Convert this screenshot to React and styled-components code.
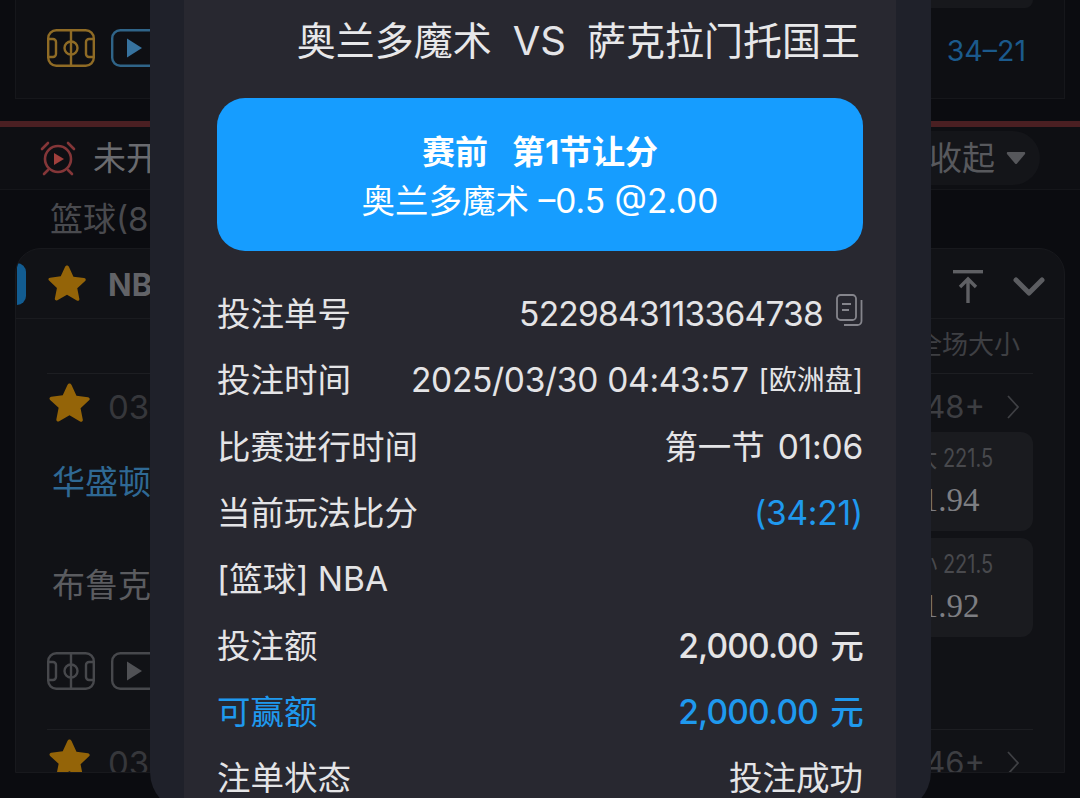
import React from "react";
import styled, { createGlobalStyle } from "styled-components";

const Global = createGlobalStyle`
  html, body { margin: 0; padding: 0; background: #0b0c10; }
  * { box-sizing: border-box; }
`;

const SANS = `Inter, "Noto Sans CJK SC", sans-serif`;

const Page = styled.div`
  position: relative;
  width: 1080px;
  height: 798px;
  overflow: hidden;
  background: #0b0c10;
  font-family: ${SANS};
  line-height: 40px;
`;

/* ---------- match list behind the receipt ---------- */

const TopCard = styled.section`
  height: 99px;
  margin: 0 15px;
  padding: 0 38px 0 31px;
  background: #0e0f13;
  border: 1px solid #16171b;
  border-top: none;
  display: flex;
  flex-direction: column;
`;

const OddsStub = styled.div`
  align-self: flex-end;
  width: 173px;
  height: 8px;
  margin-right: -7px;
  background: #17181c;
  border-radius: 0 0 12px 12px;
`;

const TopRow = styled.div`
  display: flex;
  align-items: center;
  justify-content: space-between;
  height: 80px;
`;

const IconRow = styled.div`
  display: flex;
  align-items: center;
  gap: 16px;
`;

const Score = styled.span`
  margin-top: 5px;
  font-size: 28.5px;
  color: #1b5a8c;
`;

const RedLine = styled.div`
  height: 6px;
  margin-top: 22px;
  background: #4a1f22;
`;

const StatusBar = styled.div`
  height: 63px;
  padding: 0 40px 0 40px;
  background: #0e0f13;
  border-bottom: 1px solid #15161a;
  display: flex;
  align-items: center;
  justify-content: space-between;
`;

const StatusLeft = styled.div`
  display: flex;
  align-items: center;
  gap: 17px;
  font-size: 33px;
  color: #6a6b6f;
`;

const Collapse = styled.div`
  height: 54px;
  padding: 0 14px 0 24px;
  border-radius: 27px;
  background: #141519;
  display: flex;
  align-items: center;
  gap: 11px;
  font-size: 33px;
  color: #58595d;
`;

const SportLabel = styled.div`
  height: 58px;
  padding-left: 50px;
  display: flex;
  align-items: center;
  font-size: 33px;
  color: #494a4e;
`;

const LeagueCard = styled.section`
  margin: 0 15px;
  height: 525px;
  padding: 0 1px;
  overflow: hidden;
  background: #111216;
  border: 1px solid #18191d;
  border-radius: 26px 26px 0 0;
`;

const LeagueHead = styled.header`
  height: 70px;
  margin: 0 -1px;
  padding-right: 19px;
  border-bottom: 1px solid #1a1b1f;
  display: flex;
  align-items: center;
`;

const Tab = styled.i`
  width: 9px;
  height: 42px;
  margin: 0 22px 0 1px;
  border-radius: 0 12px 12px 0;
  background: #125c91;
`;

const LeagueStar = styled.span`
  display: inline-flex;
  margin-bottom: 4px;
`;

const LeagueName = styled.strong`
  margin: 2px 0 0 22px;
  font-size: 31px;
  font-weight: 700;
  color: #626367;
`;

const HeadTools = styled.div`
  margin-left: auto;
  padding-top: 6px;
  display: flex;
  align-items: center;
  gap: 30px;
`;

const ColumnTitle = styled.div`
  height: 55px;
  margin: 0 30px;
  padding: 0 13px 2px 0;
  border-bottom: 1px solid #1d1e22;
  display: flex;
  align-items: center;
  justify-content: flex-end;
  font-size: 26px;
  color: #3e3f43;
`;

const MatchLine = styled.div`
  height: 58px;
  padding: 8px 44px 0 32px;
  display: flex;
  align-items: center;
  justify-content: space-between;
`;

const MatchTime = styled.div`
  display: flex;
  align-items: center;
  gap: 18px;
  font-size: 33px;
  color: #36373b;
`;

const RowStar = styled.span`
  display: inline-flex;
  margin-bottom: 12px;
`;

const MoreBets = styled.div`
  display: flex;
  align-items: center;
  gap: 22px;
  font-size: 31px;
  color: #3d3e42;
`;

const MatchBody = styled.div`
  display: flex;
  justify-content: space-between;
  padding: 0 30px 0 35px;
`;

const Teams = styled.div`
  display: flex;
  flex-direction: column;
`;

const Team = styled.div`
  height: 103px;
  padding-bottom: 4px;
  display: flex;
  align-items: center;
  font-size: 33px;
  color: ${(p) => (p.$home ? "#2f6994" : "#5b5c60")};
`;

const OddsStack = styled.div`
  display: flex;
  flex-direction: column;
  gap: 7px;
`;

const OddsBox = styled.div`
  width: 173px;
  height: 99px;
  padding-bottom: 3px;
  background: #1a1b1f;
  border-radius: 12px;
  display: flex;
  flex-direction: column;
  align-items: center;
  justify-content: center;
  gap: 9px;
`;

const OddsLine = styled.span`
  padding-left: 22px;
  font-size: 25px;
  line-height: 30px;
  color: #48494d;
  transform: scaleX(0.8);
`;

const OddsPrice = styled.span`
  padding-left: 8px;
  font-family: "Liberation Serif", serif;
  font-size: 33px;
  line-height: 36px;
  color: #7d7e82;
`;

const MediaRow = styled.div`
  display: flex;
  align-items: center;
  gap: 16px;
  height: 66px;
  margin-left: 30px;
`;

const CardRule = styled.div`
  height: 1px;
  margin: 25px 30px 0;
  background: #1d1e22;
`;

/* ---------- receipt sheet ---------- */

const Sheet = styled.div`
  position: absolute;
  left: 150px;
  top: -40px;
  width: 781px;
  height: 852px;
  padding-left: 34px;
  border-radius: 40px;
  overflow: hidden;
  background: #1f212a;
`;

const SheetBody = styled.div`
  width: 712px;
  height: 100%;
  padding: 56px 33px 0 33px;
  background: #282830;
`;

const Title = styled.h2`
  margin: 0;
  height: 52px;
  padding: 0 3px 2px 0;
  display: flex;
  align-items: center;
  justify-content: flex-end;
  gap: 21px;
  font-size: 39px;
  line-height: 46px;
  font-weight: 400;
  color: #e8e8ea;
  white-space: nowrap;
`;

const Versus = styled.span`
  font-size: 40px;
  color: #e4e4e7;
`;

const Banner = styled.div`
  height: 153px;
  margin-top: 30px;
  border-radius: 28px;
  background: #169dff;
  color: #fff;
  display: flex;
  flex-direction: column;
  align-items: center;
  justify-content: center;
`;

const BannerTitle = styled.div`
  display: flex;
  gap: 24px;
  margin-top: 2px;
  font-size: 33px;
  line-height: 50px;
  font-weight: 700;
`;

const BannerText = styled.div`
  font-size: 33.5px;
  line-height: 48px;
`;

const Rows = styled.div`
  margin-top: 30px;
`;

const Row = styled.div`
  height: 66.3px;
  display: flex;
  align-items: center;
  justify-content: space-between;
  font-size: 33.5px;
  line-height: 40px;
  color: ${(p) => (p.$accent ? "#1f99ee" : "#e4e4e6")};
  white-space: nowrap;
`;

const Value = styled.span`
  display: inline-flex;
  align-items: center;
  font-weight: ${(p) => (p.$strong ? 500 : 400)};
  letter-spacing: ${(p) => p.$tracking};
  word-spacing: ${(p) => p.$wordGap || "0"};
  color: ${(p) => (p.$accent ? "#1f99ee" : "inherit")};
`;

const Market = styled.span`
  margin-left: 10px;
  font-size: 28px;
  letter-spacing: 0;
`;

const CopyWrap = styled.span`
  display: inline-flex;
  margin-left: 13px;
  margin-top: -8px;
`;

/* ---------- drawn icons ---------- */

const FieldIcon = ({ color }) => (
  <svg width="48" height="38" viewBox="0 0 48 38" fill="none" stroke={color} strokeWidth="2.4">
    <rect x="1.2" y="1.2" width="45.6" height="35.6" rx="8" />
    <path d="M24 1v36" />
    <circle cx="24" cy="19" r="6.5" />
    <path d="M1.5 10h4.5a3 3 0 0 1 3 3v12a3 3 0 0 1-3 3H1.5" />
    <path d="M46.5 10H42a3 3 0 0 0-3 3v12a3 3 0 0 0 3 3h4.5" />
  </svg>
);

const PlayIcon = ({ color, fill }) => (
  <svg width="48" height="38" viewBox="0 0 48 38" fill="none">
    <rect x="1.2" y="1.2" width="45.6" height="35.6" rx="8" stroke={color} strokeWidth="2.4" />
    <path d="M16 9.5 31 19 16 28.5z" fill={fill} />
  </svg>
);

const AlarmIcon = () => (
  <svg width="36" height="36" viewBox="0 0 36 36" fill="none" stroke="#843638" strokeWidth="2.6">
    <circle cx="18" cy="19" r="13" />
    <path d="M2 9 8 3M34 9l-6-6M8 30l-4 4M28 30l4 4" strokeLinecap="round" />
    <path d="M14 13l10 6-10 6z" fill="#a03f3c" stroke="none" />
  </svg>
);

const Star = ({ size = 40 }) => (
  <svg width={size} height={size} viewBox="0 0 40 38">
    <path
      d="M20 1.5c1 0 1.6.6 2 1.5l4.8 10.4 11.2 1.4c1.7.2 2.3 2 1.1 3.1l-8.3 7.7 2.2 11.1c.3 1.6-1.3 2.7-2.7 1.9L20 32.3l-10.1 5.9c-1.4.8-3-.3-2.7-1.9l2.2-11.1-8.3-7.7c-1.2-1.1-.6-2.9 1.1-3.1l11.2-1.4L18 3c.4-.9 1-1.5 2-1.5z"
      fill="#946408"
    />
  </svg>
);

const Chevron = () => (
  <svg width="12" height="24" viewBox="0 0 12 24" fill="none" stroke="#3f4044" strokeWidth="1.8">
    <path d="M1 1l10 11L1 23" />
  </svg>
);

const CaretDown = () => (
  <svg width="20" height="14" viewBox="0 0 20 14">
    <path d="M2 1h16c1 0 1.5 1 1 2l-8 9.5c-.6.7-1.4.7-2 0L1 3C.5 2 1 1 2 1z" fill="#56575b" />
  </svg>
);

const ToTop = () => (
  <svg width="30" height="34" viewBox="0 0 30 34" fill="none" stroke="#5f6064" strokeWidth="3.4">
    <path d="M0 1.7h30" />
    <path d="M15 33V10M7 17l8-8 8 8" />
  </svg>
);

const ChevronDown = () => (
  <svg width="32" height="20" viewBox="0 0 32 20" fill="none" stroke="#5c5d61" strokeWidth="5" strokeLinecap="round" strokeLinejoin="round">
    <path d="M3 3l13 13L29 3" />
  </svg>
);

const CopyIcon = () => (
  <svg width="27" height="32" viewBox="0 0 27 32" fill="none" stroke="#85858c" strokeWidth="1.8">
    <rect x="1" y="1" width="19" height="25" rx="3.5" />
    <path d="M6 10h9M6 16h7" />
    <path d="M25.5 6v21a4 4 0 0 1-4 4H8" />
  </svg>
);

/* ---------- data ---------- */

const details = [
  { label: "投注单号", value: "5229843113364738", copy: true, tracking: "-0.75px" },
  { label: "投注时间", value: "2025/03/30 04:43:57", market: "[欧洲盘]", tracking: "-0.3px" },
  { label: "比赛进行时间", value: "第一节 01:06", tracking: "-0.2px", wordGap: "4px" },
  { label: "当前玩法比分", value: "(34:21)", blue: true, tracking: "-0.2px" },
  { label: "[篮球] NBA" },
  { label: "投注额", value: "2,000.00 元", strong: true, tracking: "-0.8px", wordGap: "4px" },
  { label: "可赢额", value: "2,000.00 元", strong: true, accent: true, tracking: "-0.8px", wordGap: "4px" },
  { label: "注单状态", value: "投注成功", tracking: "0" },
];

export default function App() {
  return (
    <Page>
      <Global />

      <TopCard>
        <OddsStub />
        <TopRow>
          <IconRow>
            <FieldIcon color="#8f6b25" />
            <PlayIcon color="#2f6488" fill="#37739f" />
          </IconRow>
          <Score>34–21</Score>
        </TopRow>
      </TopCard>
      <RedLine />
      <StatusBar>
        <StatusLeft>
          <AlarmIcon />
          未开赛事
        </StatusLeft>
        <Collapse>
          全部收起
          <CaretDown />
        </Collapse>
      </StatusBar>
      <SportLabel>篮球(8)</SportLabel>

      <LeagueCard>
        <LeagueHead>
          <Tab />
          <LeagueStar>
            <Star size={38} />
          </LeagueStar>
          <LeagueName>NBA</LeagueName>
          <HeadTools>
            <ToTop />
            <ChevronDown />
          </HeadTools>
        </LeagueHead>
        <ColumnTitle>全场大小</ColumnTitle>
        <MatchLine>
          <MatchTime>
            <RowStar>
              <Star size={41} />
            </RowStar>
            03/30
          </MatchTime>
          <MoreBets>
            48+
            <Chevron />
          </MoreBets>
        </MatchLine>
        <MatchBody>
          <Teams>
            <Team $home>华盛顿奇才</Team>
            <Team>布鲁克林篮网</Team>
          </Teams>
          <OddsStack>
            <OddsBox>
              <OddsLine>大 221.5</OddsLine>
              <OddsPrice>1.94</OddsPrice>
            </OddsBox>
            <OddsBox>
              <OddsLine>小 221.5</OddsLine>
              <OddsPrice>1.92</OddsPrice>
            </OddsBox>
          </OddsStack>
        </MatchBody>
        <MediaRow>
          <FieldIcon color="#47484c" />
          <PlayIcon color="#47484c" fill="#505155" />
        </MediaRow>
        <CardRule />
        <MatchLine>
          <MatchTime>
            <RowStar>
              <Star size={41} />
            </RowStar>
            03/30
          </MatchTime>
          <MoreBets>
            46+
            <Chevron />
          </MoreBets>
        </MatchLine>
      </LeagueCard>

      <Sheet>
        <SheetBody>
          <Title>
            <span>奥兰多魔术</span>
            <Versus>VS</Versus>
            <span>萨克拉门托国王</span>
          </Title>
          <Banner>
            <BannerTitle>
              <span>赛前</span>
              <span>第1节让分</span>
            </BannerTitle>
            <BannerText>奥兰多魔术 –0.5 @2.00</BannerText>
          </Banner>
          <Rows>
            {details.map((d) => (
              <Row key={d.label} $accent={d.accent}>
                <span>{d.label}</span>
                {d.value && (
                  <Value $strong={d.strong} $accent={d.blue} $tracking={d.tracking} $wordGap={d.wordGap}>
                    {d.value}
                    {d.market && <Market>{d.market}</Market>}
                    {d.copy && (
                      <CopyWrap>
                        <CopyIcon />
                      </CopyWrap>
                    )}
                  </Value>
                )}
              </Row>
            ))}
          </Rows>
        </SheetBody>
      </Sheet>
    </Page>
  );
}
